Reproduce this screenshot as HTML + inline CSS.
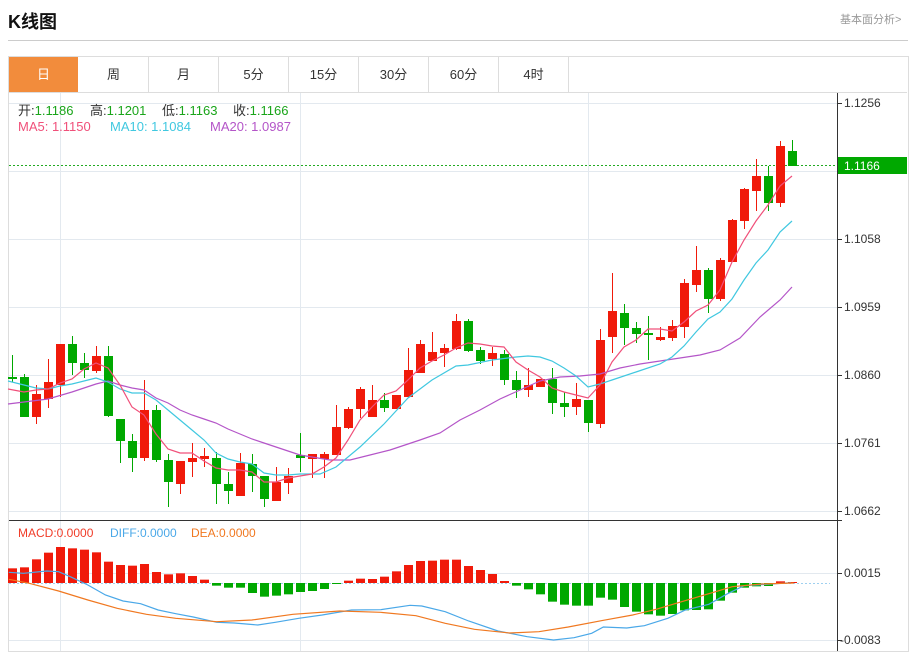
<!DOCTYPE html>
<html><head><meta charset="utf-8"><style>
body{margin:0;width:914px;height:651px;background:#fff;font-family:"Liberation Sans","Noto Sans CJK SC",sans-serif;position:relative;overflow:hidden}
.a{position:absolute;white-space:nowrap}
.tab{position:absolute;top:57px;height:35px;line-height:35px;text-align:center;font-size:13px;color:#333;border-right:1px solid #ddd}
.i{position:absolute;white-space:nowrap;font-size:13px;color:#333}
.v{color:#1aa51a}
</style></head><body>
<div class="a" style="left:8px;top:8px;font-size:18px;font-weight:bold;color:#111">K线图</div>
<div class="a" style="left:840px;top:11px;font-size:11px;color:#999">基本面分析&gt;</div>
<div class="a" style="left:8px;top:40px;width:900px;height:1px;background:#ccc"></div>
<div class="a" style="left:8px;top:56px;width:899px;height:594px;border:1px solid #ddd"></div>
<div class="tab" style="left:9px;width:69px;background:#f28c3c;color:#fff;border-right:none">日</div>
<div class="tab" style="left:79px;width:69px">周</div>
<div class="tab" style="left:149px;width:69px">月</div>
<div class="tab" style="left:219px;width:69px">5分</div>
<div class="tab" style="left:289px;width:69px">15分</div>
<div class="tab" style="left:359px;width:69px">30分</div>
<div class="tab" style="left:429px;width:69px">60分</div>
<div class="tab" style="left:499px;width:69px">4时</div>
<div class="a" style="left:9px;top:92px;width:898px;height:1px;background:#ddd"></div>
<svg class="a" style="left:0;top:0" width="914" height="651">
<g stroke="#e3e9ef" stroke-width="1">
<line x1="9" y1="103.5" x2="837" y2="103.5"/><line x1="9" y1="171.5" x2="837" y2="171.5"/><line x1="9" y1="239.5" x2="837" y2="239.5"/><line x1="9" y1="307.5" x2="837" y2="307.5"/><line x1="9" y1="375.5" x2="837" y2="375.5"/><line x1="9" y1="443.5" x2="837" y2="443.5"/><line x1="9" y1="511.5" x2="837" y2="511.5"/>
<line x1="60.5" y1="93" x2="60.5" y2="651"/><line x1="300.5" y1="93" x2="300.5" y2="651"/><line x1="588.5" y1="93" x2="588.5" y2="651"/>
<line x1="9" y1="573.5" x2="837" y2="573.5"/><line x1="9" y1="640.5" x2="837" y2="640.5"/>
</g>
<line x1="837.5" y1="93" x2="837.5" y2="651" stroke="#333"/>
<line x1="9" y1="520.5" x2="842" y2="520.5" stroke="#333"/>
<g stroke="#333"><line x1="837" y1="103.5" x2="842" y2="103.5"/><line x1="837" y1="239.5" x2="842" y2="239.5"/><line x1="837" y1="307.5" x2="842" y2="307.5"/><line x1="837" y1="375.5" x2="842" y2="375.5"/><line x1="837" y1="443.5" x2="842" y2="443.5"/><line x1="837" y1="511.5" x2="842" y2="511.5"/><line x1="837" y1="573.5" x2="842" y2="573.5"/><line x1="837" y1="640.5" x2="842" y2="640.5"/></g>
<g font-size="12" fill="#333" font-family="Liberation Sans,sans-serif">
<text x="844" y="107">1.1256</text><text x="844" y="243">1.1058</text><text x="844" y="311">1.0959</text><text x="844" y="379">1.0860</text><text x="844" y="447">1.0761</text><text x="844" y="515">1.0662</text><text x="844" y="577">0.0015</text><text x="840" y="644">-0.0083</text>
</g>
<line x1="9" y1="165.5" x2="837" y2="165.5" stroke="#22aa22" stroke-dasharray="2,2"/>
<rect x="838" y="157" width="69" height="17" fill="#00a800"/>
<text x="844" y="170" font-size="12" fill="#fff" font-family="Liberation Sans,sans-serif">1.1166</text>
<g id="c"></g>
<g fill="none" stroke-width="1.2">
<polyline stroke="#b455c8" points="8,404 24,402 48,399 72,392 96,384 108,381 120,385 132,388 144,390 156,398 168,403 180,410 192,415 204,419 216,423 228,429 240,434 252,439 264,443 276,447 288,451 300,455 330,460 350,460 370,455 390,450 420,440 440,433 460,420 480,410 500,399 520,390 540,381 560,377 580,376 600,374 620,368 640,364 660,361 680,358 700,355 720,350 740,338 760,317 780,300 792,287"/>
<polyline stroke="#40c8e0" points="8,381 24,385 36,388 48,389 60,386 72,384 84,381 96,378 108,382 120,389 132,393 144,393 156,400 168,410 180,420 192,430 204,440 216,453 228,459 240,462 252,464 264,473 276,475 288,475 300,474 320,474 336,467 360,447 384,424 408,398 432,380 456,366 468,365 492,360 516,357 528,356 540,357 552,361 564,368 576,376 588,387 600,384 612,380 636,372 660,364 672,357 684,346 696,332 708,319 720,312 732,299 744,280 756,263 768,250 780,232 792,221"/>
<polyline stroke="#f0507a" points="8,389 24,392 36,390 48,389 60,383 72,379 84,369 96,363 108,368 120,385 132,407 144,415 156,434 168,449 180,453 192,453 204,461 216,468 228,470 240,470 252,472 264,482 276,482 288,478 300,476 312,474 324,467 336,458 348,440 360,420 372,407 384,395 396,391 408,380 420,368 432,361 444,355 456,348 468,343 480,344 492,346 504,347 516,362 528,370 540,377 552,388 564,392 576,395 588,398 600,385 612,362 624,347 636,340 648,329 660,329 672,331 684,322 696,311 708,305 720,290 732,262 744,240 756,221 768,205 780,186 792,176"/>
</g>
<line x1="9" y1="583.5" x2="830" y2="583.5" stroke="#9fd0f0" stroke-dasharray="2,2"/>
<g id="m"></g>
<g transform="translate(0,515) scale(0.5858,0.33333)" fill="none">
<polyline vector-effect="non-scaling-stroke" stroke="#4aa8e8" stroke-width="1.2" points="15,172 40,175 80,168 100,170 120,185 150,210 180,240 210,258 240,266 270,285 300,296 330,306 370,322 400,324 440,330 470,322 510,310 550,300 600,285 650,284 700,271 720,273 760,290 800,318 850,348 900,365 945,375 980,368 1010,355 1030,336 1070,339 1100,332 1140,310 1170,285 1210,268 1240,238 1270,212 1310,208 1350,203"/>
<polyline vector-effect="non-scaling-stroke" stroke="#f07820" stroke-width="1.2" points="15,193 50,205 100,228 150,255 200,280 250,298 300,310 370,320 430,315 500,298 580,288 650,292 710,302 760,325 810,343 870,354 920,350 970,336 1030,316 1080,300 1120,283 1160,262 1210,236 1250,215 1300,207 1355,204"/>
</g>
<g font-size="12" font-family="Liberation Sans,sans-serif">
<text x="18" y="537" fill="#f03c28">MACD:0.0000</text><text x="110" y="537" fill="#4aa8e8">DIFF:0.0000</text><text x="191" y="537" fill="#f07820">DEA:0.0000</text>
</g>
</svg>
<div class="i" style="left:18px;top:100px">开:<span class="v">1.1186</span></div>
<div class="i" style="left:90px;top:100px">高:<span class="v">1.1201</span></div>
<div class="i" style="left:162px;top:100px">低:<span class="v">1.1163</span></div>
<div class="i" style="left:233px;top:100px">收:<span class="v">1.1166</span></div>
<div class="i" style="left:18px;top:119px;color:#f0507a">MA5: 1.1150</div>
<div class="i" style="left:110px;top:119px;color:#40c8e0">MA10: 1.1084</div>
<div class="i" style="left:210px;top:119px;color:#b455c8">MA20: 1.0987</div>
<script>
var d=[["g",377,379,355,382],["g",377,417,374,417],["r",394,417,385,424],["r",382,399,359,408],["r",344,385,344,397],["g",344,363,336,375],["g",363,370,353,378],["r",356,371,346,373],["g",356,416,346,417],["g",419,441,419,463],["g",441,458,434,472],["r",410,458,380,461],["g",410,460,405,462],["g",460,482,454,507],["r",461,484,461,494],["r",458,462,443,477],["r",456,459,448,467],["g",458,484,452,504],["g",484,491,472,504],["r",463,496,453,496],["g",464,476,454,492],["g",476,499,476,507],["r",482,501,467,501],["r",476,483,468,494],["g",455,458,433,472],["r",454,459,454,478],["r",454,459,452,478],["r",427,455,405,455],["r",409,428,407,429],["r",389,409,387,418],["r",400,417,385,417],["g",400,408,393,412],["r",395,409,395,409],["r",370,397,348,397],["r",344,373,340,373],["r",352,361,332,361],["r",348,353,344,367],["r",321,349,314,350],["g",321,351,319,352],["g",350,361,347,364],["r",353,359,347,366],["g",354,380,350,385],["g",380,390,371,398],["r",385,390,368,397],["r",379,387,379,387],["g",379,403,368,414],["g",403,407,392,417],["r",399,407,383,415],["g",400,423,400,432],["r",340,424,329,428],["r",311,337,273,353],["g",313,328,304,345],["g",328,334,322,343],["g",333,335,316,360],["r",337,340,327,341],["r",326,338,320,341],["r",283,327,279,338],["r",270,285,246,292],["g",270,299,268,313],["r",260,299,258,301],["r",220,262,219,262],["r",189,221,188,229],["r",176,191,159,211],["g",176,203,166,211],["r",146,203,141,207],["g",151,166,140,166]];
var m=[160,157,133,113,96,100,104,112,140,150,152,147,171,178,175,183,194,212,218,218,234,245,242,238,231,228,222,206,197,191,192,185,169,150,138,137,134,134,153,165,177,198,212,223,238,260,269,272,272,248,254,276,290,298,302,297,286,285,283,257,233,218,214,213,199,201];
var s="",R="#f01a0a",G="#00a800";
d.forEach(function(c,i){var x=12+12*i,col=c[0]=="r"?R:G;s+='<line x1="'+(x+.5)+'" y1="'+c[3]+'" x2="'+(x+.5)+'" y2="'+c[4]+'" stroke="'+col+'"/>';s+='<rect x="'+(x-4)+'" y="'+c[1]+'" width="9" height="'+Math.max(1.5,c[2]-c[1])+'" fill="'+col+'"/>';});
document.getElementById("c").innerHTML=s;
var t="";m.forEach(function(v,i){var y=515+v/3,x=12+12*i,z=583;var col=y<z?R:G;t+='<rect x="'+(x-4)+'" y="'+Math.min(y,z)+'" width="9" height="'+Math.max(1,Math.abs(y-z))+'" fill="'+col+'"/>';});
document.getElementById("m").innerHTML=t;
</script>
</body></html>
